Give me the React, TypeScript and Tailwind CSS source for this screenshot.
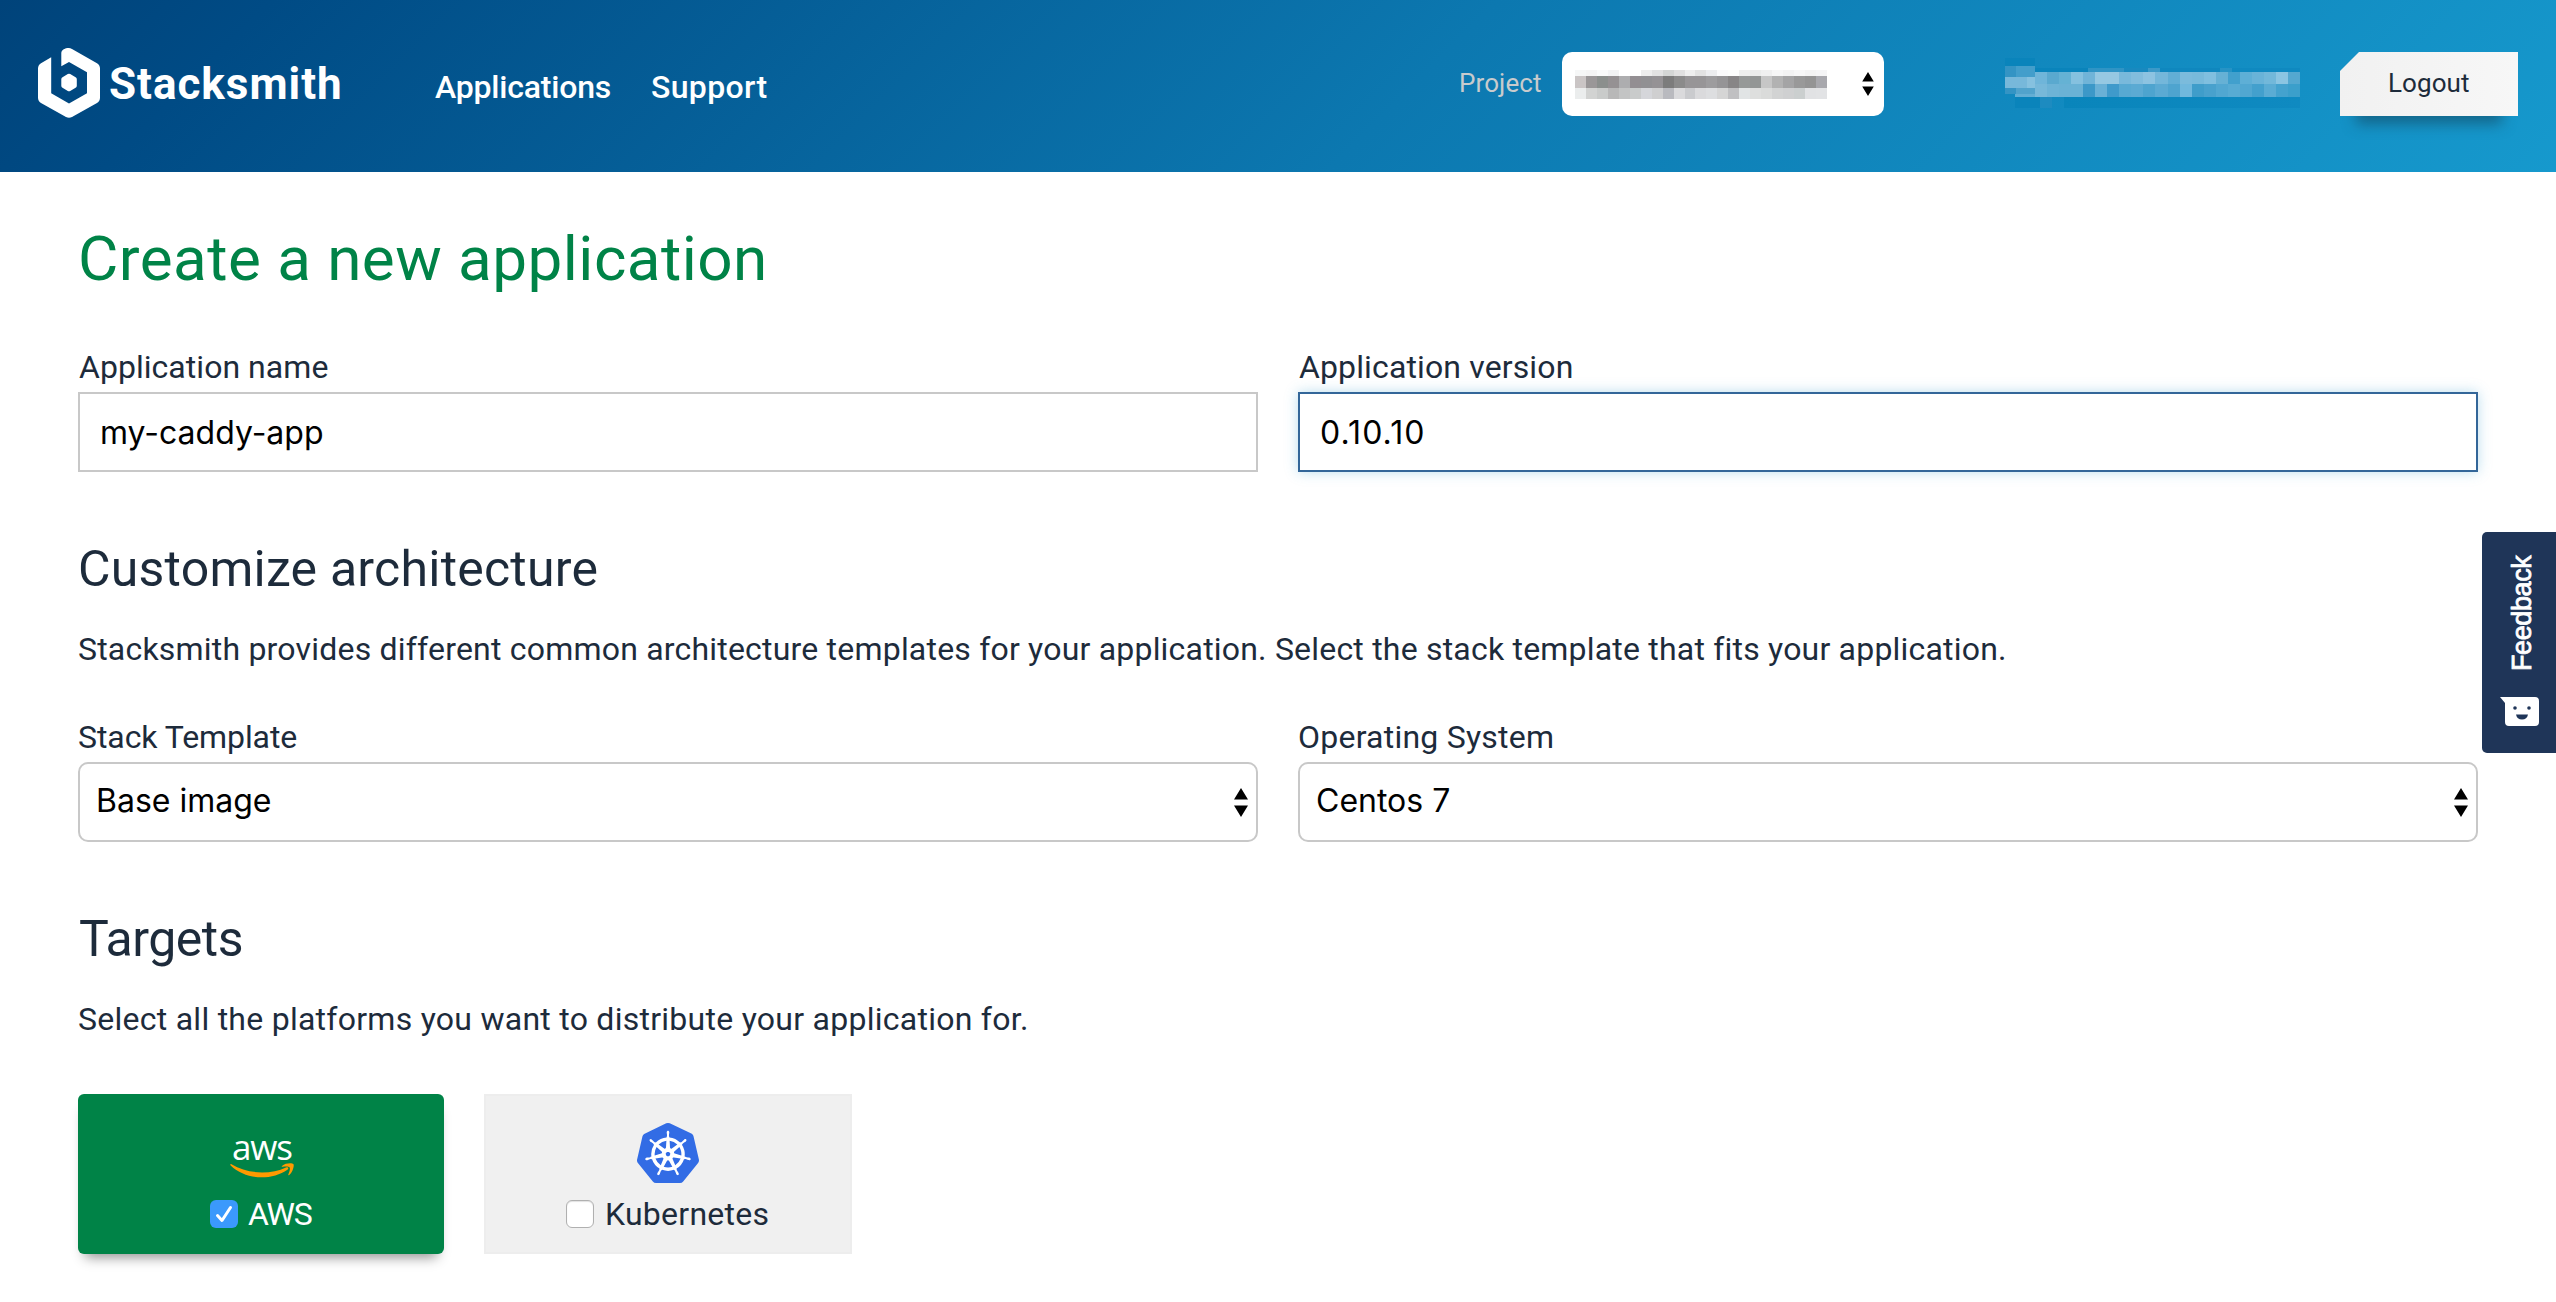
import { SiKubernetes } from "react-icons/si";

const PROJECT_MASK: string[][] = [
  ["#f6f7f7", "#f4f4f4", "#f9fafa", "#f2f3f4", "#ffffff", "#fefefe", "#ededed", "#e2e2e2", "#d4d6d5", "#e0e0e0", "#eeeeee", "#e2e2e2", "#ecedef", "#fafafb", "#fcfdfc", "#eeefee", "#ebeceb", "#f0f0f0", "#f7f7f7", "#f3f3f3", "#f7f7f7", "#f3f3f3", "#f5f5f6"],
  ["#cac5c5", "#9a9798", "#8b8f8d", "#959193", "#adadaf", "#938e92", "#919093", "#959295", "#7c7c7c", "#8b8b8b", "#979597", "#979597", "#9d9c9e", "#959496", "#878586", "#969998", "#939695", "#c6c6c6", "#b2b2b2", "#a4a4a5", "#999999", "#949494", "#a8a8ad"],
  ["#ebeded", "#d2d3d2", "#c9cbca", "#b8b8b8", "#c3c4c4", "#c9cbcb", "#d5d6da", "#cfcfd0", "#b9babf", "#dadadc", "#cacbce", "#dadadc", "#dddee0", "#d5d5d5", "#c0c0c2", "#e1e4e5", "#dedfde", "#dadbda", "#d2d3d3", "#cfd0d1", "#cbcfcf", "#e1e2e4", "#e2e3e5"],
];

const EMAIL_MASK: string[][] = [
  ["#6fb5d9", "#5aa9cf", "#65b2d4", "#85c1df", "#70b4d8", "#96c8e2", "#96c8e2", "#79b9db", "#82bddd", "#8dc3e1", "#74b7da", "#61aed5", "#7bbbdc", "#78badb", "#80bfdf", "#66b1d5", "#41a0cd", "#5eafd6", "#69b3d8", "#72b8da", "#8bc5e2", "#54a8d0"],
  ["#77b8d9", "#6db3d6", "#6ab2d5", "#6ab2d5", "#3c98c8", "#69b0d6", "#3f9acb", "#57a9d2", "#5baad3", "#4ea4cf", "#5baad3", "#4ea4cf", "#70b8dd", "#3f9dca", "#48a1cd", "#51a7d1", "#57abd3", "#51a7d1", "#43a0cd", "#5aacd4", "#44a2ce", "#3b9fcb"],
];

function Arrows({ className }: { className: string }) {
  return (
    <svg viewBox="0 0 14 29" className={className} fill="#000">
      <path d="M7 0l7 11.5H0z M7 29l7-11.5H0z" />
    </svg>
  );
}

function Logo() {
  return (
    <svg viewBox="0 0 62 70" className="h-[70px] w-[62px] shrink-0" fill="#fff">
      <path d="M0 20.500Q0 17 3 15.200L13.200 9.300V45.300L31 55.500L49 45.300V24.200L31 14L23.300 18.300V4.800Q23.300 2.500 25.300 1.400L28 .3Q31 -.6 34 1L59 15.200Q62 17 62 20.500V49.800Q62 53.200 59 55L34 69Q31 70.400 28 69L3 55Q0 53.200 0 49.800Z" />
      <path d="M29.800 26.100Q31 25.400 32.200 26.100L37.600 29.200Q38.800 29.900 38.800 31.300V37.700Q38.800 39.100 37.600 39.800L32.200 42.900Q31 43.600 29.800 42.900L24.500 39.800Q23.300 39.100 23.300 37.700V31.300Q23.300 29.900 24.500 29.200Z" />
    </svg>
  );
}

function SelectField({ label, value, spacing }: { label: string; value: string; spacing: string }) {
  return (
    <div className="w-[1180px]">
      <div className={`h-[50px] text-[32px] leading-[50px] ${spacing}`}>{label}</div>
      <div className="flex h-20 w-full items-center justify-between rounded-[10px] border-2 border-[#c8c8c8] bg-white pr-[8px] pl-[16px] text-black">
        <span className="pb-[3px] font-['Inter',sans-serif] text-[32px] leading-[40px]">{value}</span>
        <Arrows className="h-[29px] w-[14px]" />
      </div>
    </div>
  );
}

export default function App() {
  return (
    <div className="relative h-[1302px] w-[2556px] overflow-hidden bg-white font-['Roboto',sans-serif] text-[#1d2b3b]">
      <header className="flex h-[172px] bg-[linear-gradient(135deg,#00437a_0%,#004b85_10%,#0c78b0_55%,#1699cd_100%)] pl-[38px]">
        <div className="flex h-[70px] w-[397px] pt-12">
          <Logo />
          <span className="ml-[9px] h-[70px] text-[44px] leading-[72px] font-bold tracking-[0.98px] text-white">Stacksmith</span>
        </div>
        <nav className="flex pt-[67px] text-[32px] leading-[40px] font-medium text-white">
          <span className="w-[216px] tracking-[-0.2px]">Applications</span>
          <span className="w-[808px] tracking-[0.35px]">Support</span>
        </nav>
        <span className="w-[103px] pt-[63px] text-[26px] leading-[40px] tracking-[0.1px] text-[#c8cbcd]">Project</span>
        <div className="mt-[52px] flex h-16 w-[322px] items-center justify-between rounded-[10px] bg-white pr-[10px] pl-[13px]">
          <div className="mt-px flex w-[252px] flex-col">
            {PROJECT_MASK.map((row, i) => (
              <div key={i} className={i === 0 ? "flex h-[6px]" : i === 1 ? "flex h-[12px]" : "flex h-[11px]"}>
                {row.map((c, j) => (
                  <i key={j} className="h-full flex-1" style={{ backgroundColor: c }} />
                ))}
              </div>
            ))}
          </div>
          <Arrows className="h-[24px] w-[12px]" />
        </div>
        <div className="mt-[58px] ml-[121px] flex h-[50px] w-[295px]">
          <div className="flex w-[30px] flex-col">
            <i className="h-[8px] bg-[#0a84bb]" />
            <span className="flex h-[11px]">
              <i className="w-[11px] bg-[#3494c4]" />
              <i className="flex-1 bg-[#439ecb]" />
            </span>
            <span className="flex h-[11px]">
              <i className="w-[22px] bg-[#77b8da]" />
              <i className="flex-1 bg-[#86c1df]" />
            </span>
            <span className="flex h-[6px]">
              <i className="w-[11px] bg-[#3494c4]" />
              <i className="flex-1 bg-[#51a3cc]" />
            </span>
            <span className="ml-[10px] flex h-[3px] bg-[#62aed4]" />
            <i className="ml-[10px] h-[11px] bg-[#0a84bb]" />
          </div>
          <div className="flex w-[265px] flex-col pt-[10px]">
            <span className="flex h-[4px]">
              <i className="w-[53px] bg-[#0a84bb]" />
              <i className="w-[36px] bg-[#2f94c5]" />
              <i className="w-[24px] bg-[#1889bf]" />
              <i className="w-[12px] bg-[#3b99c8]" />
              <i className="w-[60px] bg-[#0f87be]" />
              <i className="w-[12px] bg-[#2693c5]" />
              <i className="flex-1 bg-[#0f89c0]" />
            </span>
            {EMAIL_MASK.map((row, i) => (
              <span key={i} className={i === 0 ? "flex h-[12px]" : "flex h-[13px]"}>
                {row.map((c, j) => (
                  <i key={j} className="h-full flex-1" style={{ backgroundColor: c }} />
                ))}
              </span>
            ))}
            <span className="flex h-[11px]">
              <i className="w-[5px] bg-[#0a84bb]" />
              <i className="w-[12px] bg-[#1d8bc0]" />
              <i className="w-[12px] bg-transparent" />
              <i className="flex-1 bg-[linear-gradient(90deg,#0985bb,#0f8ac1)]" />
            </span>
          </div>
        </div>
        <div className="relative mt-[52px] ml-[40px] h-16 w-[178px]">
          <div className="absolute inset-x-[16px] bottom-0 h-8 shadow-[0_8px_14px_rgba(20,60,80,0.5)]" />
          <div className="relative h-16 pl-[48px] text-[26px] leading-[62px] tracking-[0.08px] [background:linear-gradient(90deg,#f1f1f1,#f7f7f7)] [clip-path:polygon(19px_0,100%_0,100%_100%,0_100%,0_19px)]">
            Logout
          </div>
        </div>
      </header>

      <main className="pt-[45px] pl-[78px]">
        <h1 className="h-[84px] text-[62px] leading-[84px] tracking-[0.46px] text-[#008347]">Create a new application</h1>

        <div className="mt-[41px] flex gap-10">
          <div className="w-[1180px]">
            <div className="h-[50px] pl-px text-[32px] leading-[50px] tracking-[0.04px]">Application name</div>
            <div className="h-20 border-2 border-[#c8c8c8] pl-[20px] font-['Inter',sans-serif] text-[32px] leading-[78px] text-black">my-caddy-app</div>
          </div>
          <div className="w-[1180px]">
            <div className="h-[50px] pl-px text-[32px] leading-[50px] tracking-[0.13px]">Application version</div>
            <div className="h-20 border-2 border-[#336699] pl-[20px] font-['Inter',sans-serif] text-[32px] leading-[78px] tracking-[1.1px] text-black shadow-[0_0_12px_rgba(60,160,210,0.35)]">0.10.10</div>
          </div>
        </div>

        <h2 className="mt-[67px] h-[60px] text-[50px] leading-[60px] tracking-[0.23px]">Customize architecture</h2>
        <p className="mt-[30px] h-10 text-[32px] leading-[40px] tracking-[0.2px]">
          Stacksmith provides different common architecture templates for your application. Select the stack template that fits your application.
        </p>
        <div className="mt-[43px] flex gap-10">
          <SelectField label="Stack Template" value="Base image" spacing="tracking-[-0.08px]" />
          <SelectField label="Operating System" value="Centos 7" spacing="tracking-[0.23px]" />
        </div>

        <h2 className="mt-[67px] h-[60px] pl-px text-[50px] leading-[60px] tracking-[-0.5px]">Targets</h2>
        <p className="mt-[30px] h-10 text-[32px] leading-[40px] tracking-[0.26px]">Select all the platforms you want to distribute your application for.</p>
        <div className="mt-[55px] flex gap-10">
          <div className="flex h-[160px] w-[366px] flex-col rounded-[6px] bg-[#008347] text-white shadow-[0_10px_12px_-7px_rgba(0,0,0,0.45)]">
            <div className="relative mt-[30px] ml-[152px] h-[54px] w-[64px]">
              <span className="absolute top-[-1px] left-[2px] font-['Open_Sans',sans-serif] text-[35px] leading-[48px] font-medium tracking-[-1.2px]">aws</span>
              <svg viewBox="0 0 64 18" className="absolute top-[38px] left-0 h-[18px] w-[64px]" fill="#ff9900">
                <path d="M1.500 2.200C18 12.500 41 12.500 56 5.400c2.200-.9 3.200 1 1.400 2.300C42 18.500 16 18.500 .7 3.600C-.2 2.600.4 1.500 1.500 2.200z" />
                <path d="M52 4c3.500-3.200 10-3 11.300-2 1.300 1.200-.6 8.300-4 11-.8.600-1.300.2-1-.6 1.500-3.300 2-6.300 1.200-7.200-.9-1-4-.9-6.700-.5-.9.100-1.500-.1-.8-.7z" />
              </svg>
            </div>
            <div className="mt-[21px] flex items-center pl-[132px]">
              <svg viewBox="0 0 28 28" className="h-7 w-7 rounded-[6px] bg-[#3b99fc]" fill="none" stroke="#fff" strokeWidth="3" strokeLinecap="round" strokeLinejoin="round">
                <path d="M7.500 15.500L12 20.500L20.500 7.500" />
              </svg>
              <span className="ml-[10px] text-[32px] leading-[30px] tracking-[-1.2px]">AWS</span>
            </div>
          </div>
          <div className="flex h-[160px] w-[368px] flex-col border-2 border-[#ededed] bg-[#f0f0f0]">
            <div className="mt-[26px] ml-[151px] h-[62px] w-[62px] bg-[radial-gradient(circle_closest-side,#fff_85%,transparent_86%)]">
              <SiKubernetes className="h-[62px] w-[62px] text-[#326ce5]" />
            </div>
            <div className="mt-[15px] flex items-center pl-[80px]">
              <span className="h-7 w-7 rounded-[6px] border border-[#b0b0b0] bg-white shadow-[inset_0_1px_1px_rgba(0,0,0,0.12)]" />
              <span className="ml-[11px] text-[32px] leading-[30px] tracking-[0.25px]">Kubernetes</span>
            </div>
          </div>
        </div>
      </main>

      <aside className="absolute top-[532px] right-0 flex h-[221px] w-[74px] flex-col items-center rounded-l-[5px] bg-[#1f3558] text-white">
        <span className="mt-[22px] h-[117px] rotate-180 pr-[6px] font-['Liberation_Sans',sans-serif] text-[27px] leading-[30px] tracking-[-0.4px] [-webkit-text-stroke:0.8px_white] [writing-mode:vertical-rl]">Feedback</span>
        <svg viewBox="0 0 39 29" className="mt-[26px] h-[29px] w-[39px]">
          <path d="M0 0H35Q39 0 39 4V25Q39 29 35 29H9Q5 29 5 25V6Z" fill="#fff" />
          <g fill="#1f3558">
            <circle cx="15" cy="11" r="1.800" />
            <circle cx="29" cy="11" r="1.800" />
            <path d="M16 17.500H28Q27 22.500 22 22.500T16 17.500Z" />
          </g>
        </svg>
      </aside>
    </div>
  );
}
